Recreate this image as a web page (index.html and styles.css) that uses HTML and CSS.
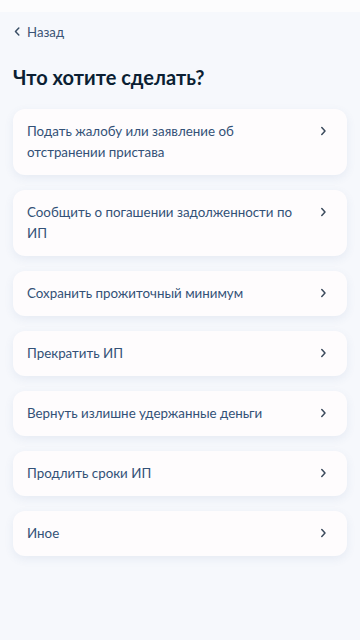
FILE: index.html
```html
<!DOCTYPE html>
<html>
<head>
    <meta charset="utf-8">
    <title>Что хотите сделать?</title>
    <link rel="stylesheet" href="styles.css">
</head>
<body>
    <div class="status-bar"></div>

    <div class="page">
        <a class="back" href="#">
            <svg class="back-icon" width="6" height="9" viewBox="0 0 6 9">
                <path d="M4.8 1L1.5 4.5L4.8 8" fill="none" stroke="#3b4f66" stroke-width="1.5" stroke-linecap="round" stroke-linejoin="round"/>
            </svg>
            <span>Назад</span>
        </a>

        <h1 class="heading">Что хотите сделать?</h1>

        <div class="options">
            <a class="option" href="#">
                <span class="option-text">Подать жалобу или заявление об отстранении пристава</span>
                <svg class="chevron" width="7" height="10" viewBox="0 0 7 10"><path d="M1.8 1.5L5 5L1.8 8.5"/></svg>
            </a>
            <a class="option" href="#">
                <span class="option-text">Сообщить о погашении задолженности по ИП</span>
                <svg class="chevron" width="7" height="10" viewBox="0 0 7 10"><path d="M1.8 1.5L5 5L1.8 8.5"/></svg>
            </a>
            <a class="option" href="#">
                <span class="option-text">Сохранить прожиточный минимум</span>
                <svg class="chevron" width="7" height="10" viewBox="0 0 7 10"><path d="M1.8 1.5L5 5L1.8 8.5"/></svg>
            </a>
            <a class="option" href="#">
                <span class="option-text">Прекратить ИП</span>
                <svg class="chevron" width="7" height="10" viewBox="0 0 7 10"><path d="M1.8 1.5L5 5L1.8 8.5"/></svg>
            </a>
            <a class="option" href="#">
                <span class="option-text">Вернуть излишне удержанные деньги</span>
                <svg class="chevron" width="7" height="10" viewBox="0 0 7 10"><path d="M1.8 1.5L5 5L1.8 8.5"/></svg>
            </a>
            <a class="option" href="#">
                <span class="option-text">Продлить сроки ИП</span>
                <svg class="chevron" width="7" height="10" viewBox="0 0 7 10"><path d="M1.8 1.5L5 5L1.8 8.5"/></svg>
            </a>
            <a class="option" href="#">
                <span class="option-text">Иное</span>
                <svg class="chevron" width="7" height="10" viewBox="0 0 7 10"><path d="M1.8 1.5L5 5L1.8 8.5"/></svg>
            </a>
        </div>
    </div>
</body>
</html>
```

FILE: styles.css
```css
body {
    font-family: Lato, "Noto Sans", sans-serif;
    margin: 0;
    min-height: 100vh;
    background: #f6f8fc;
    color: #0b1f33;
}

.status-bar {
    height: 12px;
    background: #fcfcfd;
}

.page {
    padding: 0 13px;
}

/* Back link */
.back {
    display: flex;
    align-items: center;
    gap: 7px;
    padding: 11px 0 0 1px;
    height: 17px;
    color: #3b5475;
    font-size: 13.2px;
    text-decoration: none;
}

.heading {
    margin: 23px 0 0 0;
    font-size: 20px;
    font-weight: 700;
    line-height: 28px;
    color: #0b1f33;
}

/* Options list */
.options {
    display: flex;
    flex-direction: column;
    gap: 15px;
    margin-top: 18px;
}

.option {
    display: flex;
    align-items: flex-start;
    justify-content: space-between;
    gap: 16px;
    padding: 12px 20px 12px 14px;
    background: #fefcfd;
    border-radius: 12px;
    box-shadow: 0 3px 10px rgba(70, 100, 160, 0.09);
    text-decoration: none;
}

.option-text {
    font-size: 13.35px;
    line-height: 21px;
    color: #335177;
}

.chevron {
    flex-shrink: 0;
    margin-top: 5px;
}

.chevron path {
    fill: none;
    stroke: #3b4a5c;
    stroke-width: 1.5;
    stroke-linecap: round;
    stroke-linejoin: round;
}
```
